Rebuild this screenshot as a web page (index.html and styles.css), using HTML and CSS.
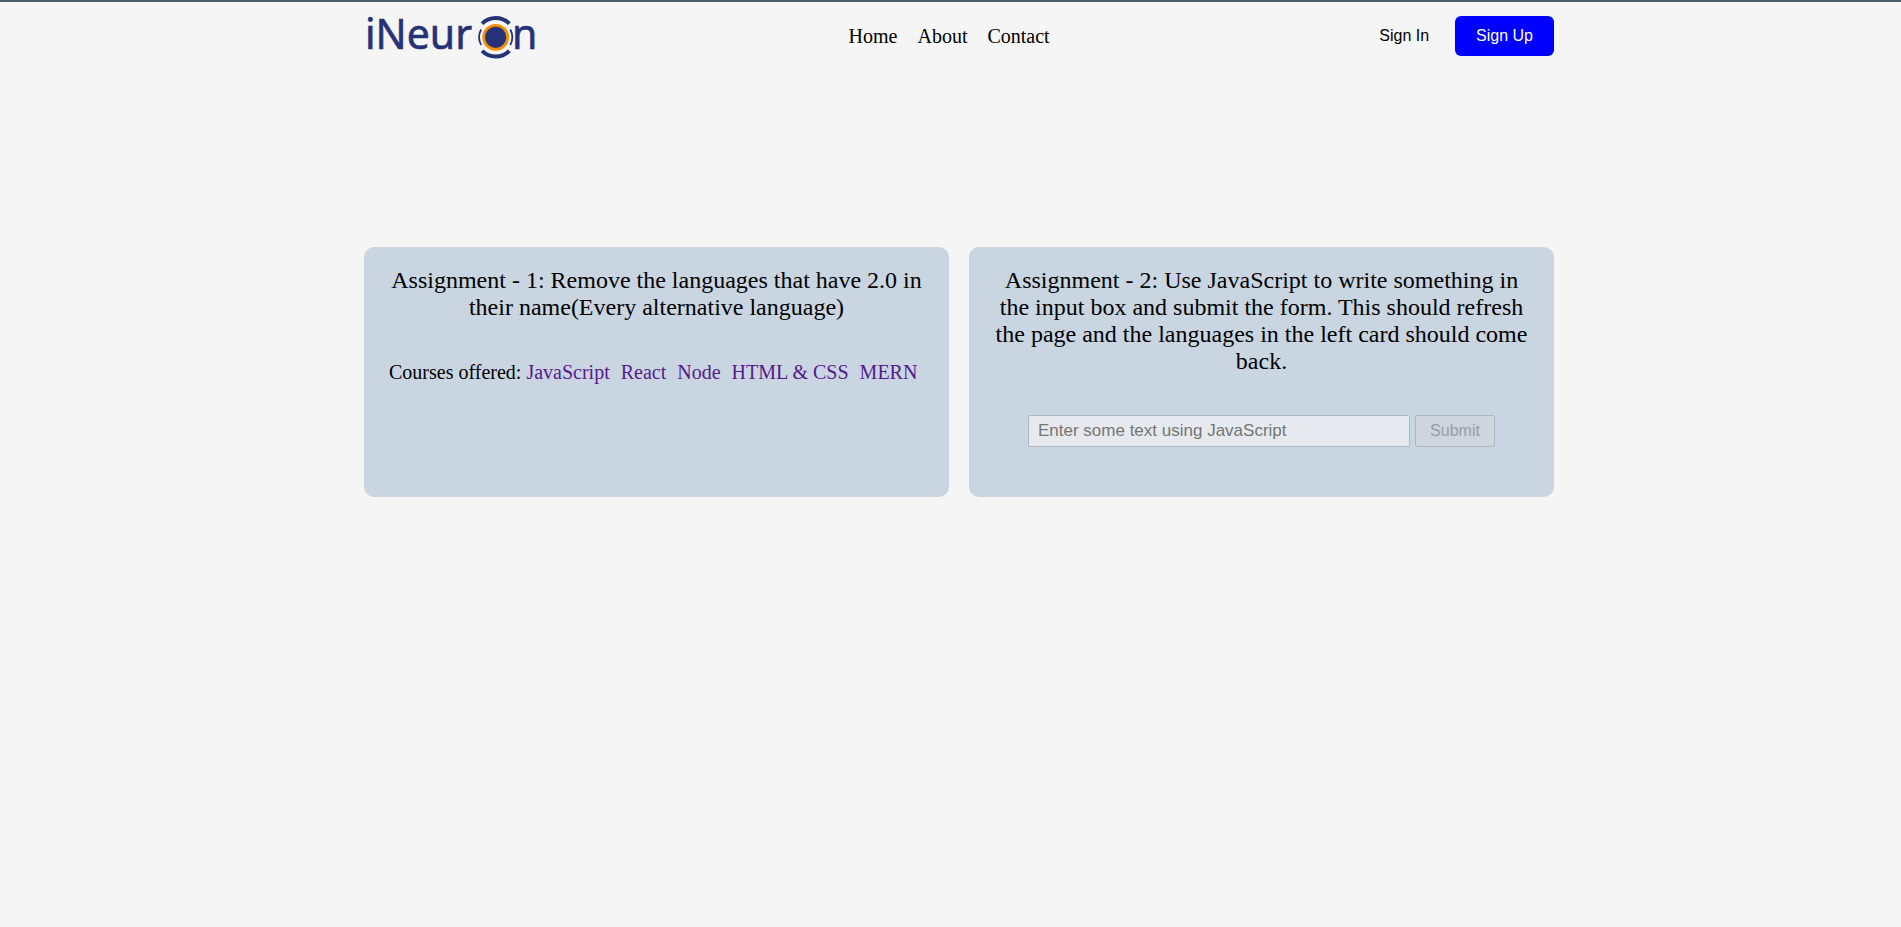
FILE: index.html
```html
<!DOCTYPE html>
<html lang="en">
<head>
<meta charset="utf-8">
<meta name="viewport" content="width=device-width, initial-scale=1">
<title>iNeuron</title>
<link rel="stylesheet" href="styles.css">
</head>
<body>
<header class="header">
  <div class="container header-row">
    <a class="logo" href="#" aria-label="iNeuron">
      <svg width="176" height="64" viewBox="0 -8 176 64">
        <g class="logo-text">
          <text x="1" y="37">iNeur</text>
          <text x="148" y="37">n</text>
        </g>
        <g fill="none" stroke="#263277" transform="translate(131.7 25.3)">
          <path stroke-width="4" d="M-13.6-13.6A19.2 19.2 0 0 1 13.6-13.6M-13.6 13.6A19.2 19.2 0 0 0 13.6 13.6"/>
          <path stroke-width="1.8" d="M-14.6-7.8A16.6 16.6 0 0 0-14.6 7.8M14.6-7.8A16.6 16.6 0 0 1 14.6 7.8"/>
          <circle r="12" fill="#263277" stroke="#f78f06" stroke-width="2.8"/>
        </g>
      </svg>
    </a>
    <nav class="nav">
      <a href="#">Home</a>
      <a href="#">About</a>
      <a href="#">Contact</a>
    </nav>
    <div class="actions">
      <button class="btn" type="button">Sign In</button>
      <button class="btn btn-primary" type="button">Sign Up</button>
    </div>
  </div>
</header>
<main class="container cards">
  <section class="card">
    <h2 class="card-title">Assignment - 1: Remove the languages that have 2.0 in their name(Every alternative language)</h2>
    <div class="courses">
      <span>Courses offered:</span>
      <ul class="course-list">
        <li><a href="#">JavaScript</a></li>
        <li><a href="#">React</a></li>
        <li><a href="#">Node</a></li>
        <li><a href="#">HTML &amp; CSS</a></li>
        <li><a href="#">MERN</a></li>
      </ul>
    </div>
  </section>
  <section class="card">
    <h2 class="card-title">Assignment - 2: Use JavaScript to write something in the input box and submit the form. This should refresh the page and the languages in the left card should come back.</h2>
    <form class="form">
      <input class="field" type="text" placeholder="Enter some text using JavaScript" aria-label="Enter some text using JavaScript" disabled>
      <button class="submit" type="submit" disabled>Submit</button>
    </form>
  </section>
</main>
</body>
</html>
```
FILE: styles.css
```css
* {
  box-sizing: border-box;
  margin: 0;
  padding: 0;
}

body {
  background: #f5f5f5;
  color: #000;
  font-family: "Liberation Serif", "Times New Roman", serif;
  font-size: 20px;
}

a {
  color: inherit;
  text-decoration: none;
}

.container {
  max-width: 1207px;
  margin: 0 auto;
  padding-left: 17px;
}

.header {
  border-top: 2px solid #4a5c66;
  padding: 2px 0;
}

.header-row {
  display: flex;
  align-items: center;
  justify-content: space-between;
}

.logo svg {
  display: block;
  overflow: visible;
}

.logo-text {
  fill: #263277;
  stroke: #263277;
  stroke-width: 0.6px;
  font-family: "Noto Sans", "Open Sans", sans-serif;
  font-size: 41px;
}

.nav {
  display: flex;
  gap: 20px;
}

.actions {
  display: flex;
  gap: 5px;
}

.btn {
  height: 40px;
  padding: 0 21px;
  border: 0;
  border-radius: 6px;
  background: transparent;
  color: #000;
  font: 16px "Liberation Sans", Arial, sans-serif;
}

.btn-primary {
  background: #00f;
  color: #fff;
}

.cards {
  display: grid;
  grid-template-columns: 1fr 1fr;
  gap: 20px;
  margin-top: 177px;
}

.card {
  display: flex;
  flex-direction: column;
  gap: 40px;
  min-height: 250px;
  padding: 20px 25px;
  border-radius: 10px;
  background: #c9d5e1;
}

.card-title {
  font-size: 24px;
  font-weight: 400;
  line-height: 27px;
  text-align: center;
}

.courses {
  display: flex;
  gap: 5px;
}

.course-list {
  display: flex;
  gap: 11px;
  list-style: none;
  color: #551a8b;
}

.form {
  display: flex;
  justify-content: center;
  gap: 5px;
}

.field,
.submit {
  height: 32px;
  border: 1px solid #adb7c2;
  border-radius: 2px;
  font: 16px "Liberation Sans", Arial, sans-serif;
}

.field {
  width: 382px;
  padding: 0 9px;
  background: #e6eaef;
  font-size: 17px;
}

.field::placeholder {
  color: #757575;
}

.submit {
  width: 80px;
  background: #cfd5de;
  color: #989da6;
}
```
